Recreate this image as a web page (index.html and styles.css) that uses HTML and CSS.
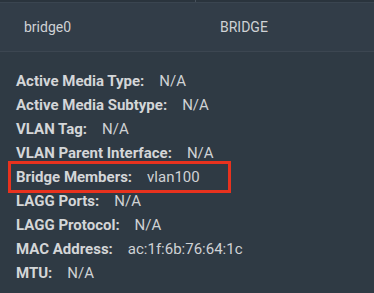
FILE: index.html
```html
<!DOCTYPE html>
<html lang="en">
<head>
    <meta charset="UTF-8">
    <title>Interface Details</title>
    <link rel="stylesheet" href="styles.css">
</head>
<body>
    <!-- Table top edge -->
    <div class="top-strip">
        <div class="top-cell"></div>
        <div class="top-cell"></div>
    </div>

    <!-- Interface row -->
    <div class="row">
        <div class="cell name">bridge0</div>
        <div class="cell type">BRIDGE</div>
    </div>

    <!-- Expanded details -->
    <div class="details">
        <div class="detail"><span class="label">Active Media Type:</span><span class="value">N/A</span></div>
        <div class="detail"><span class="label">Active Media Subtype:</span><span class="value">N/A</span></div>
        <div class="detail"><span class="label">VLAN Tag:</span><span class="value">N/A</span></div>
        <div class="detail"><span class="label">VLAN Parent Interface:</span><span class="value">N/A</span></div>
        <div class="detail highlight"><span class="label">Bridge Members:</span><span class="value">vlan100</span></div>
        <div class="detail"><span class="label">LAGG Ports:</span><span class="value">N/A</span></div>
        <div class="detail"><span class="label">LAGG Protocol:</span><span class="value">N/A</span></div>
        <div class="detail"><span class="label">MAC Address:</span><span class="value">ac:1f:6b:76:64:1c</span></div>
        <div class="detail"><span class="label">MTU:</span><span class="value">N/A</span></div>
    </div>
</body>
</html>
```

FILE: styles.css
```css
body {
    font-family: Roboto, "Liberation Sans", sans-serif;
    background-color: #2f3a44;
    margin: 0;
    padding: 0;
    color: #cfd2d5;
    font-size: 14px;
}

.top-strip {
    display: flex;
    height: 2px;
    background-color: #2a343d;
}

.top-cell {
    flex: 0 0 195px;
    border-right: 1px solid #48525c;
}

.top-cell:last-child {
    flex: 1;
    border-right: none;
}

.row {
    display: flex;
    align-items: center;
    height: 50px;
    background-color: #323d48;
    border-top: 1px solid #3a4550;
    border-bottom: 1px solid #3c4651;
    box-sizing: border-box;
}

.cell.name {
    width: 196px;
    padding-left: 24px;
    box-sizing: border-box;
}

.cell.type {
    padding-left: 24px;
}

.details {
    padding: 17px 0 0 8px;
    font-size: 15px;
}

.detail {
    display: flex;
    align-items: center;
    height: 24px;
    padding-left: 8px;
    white-space: nowrap;
    box-sizing: border-box;
}

.label {
    font-weight: bold;
    color: #d4d6d8;
    margin-right: 15px;
}

.value {
    color: #cfd2d5;
}

.highlight {
    border: 3px solid #e8321e;
    margin: -4px 0;
    width: 223px;
    height: 32px;
    padding-left: 5px;
}
```
